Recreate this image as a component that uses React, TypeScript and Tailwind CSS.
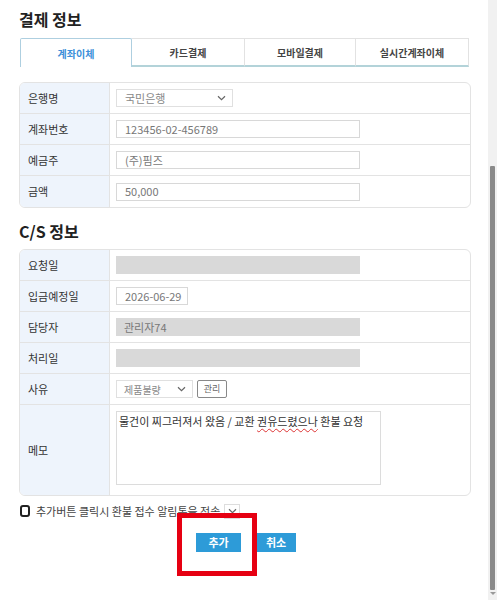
import React from "react";

const font = { fontFamily: '"Noto Sans CJK KR", "Noto Sans", sans-serif' };

function Chevron({ className = "" }: { className?: string }) {
  return (
    <svg width="9" height="6" viewBox="0 0 9 6" className={className}>
      <path d="M1 1.2 L4.5 4.6 L8 1.2" fill="none" stroke="#666" strokeWidth="1.2" />
    </svg>
  );
}

function Row({ label, children, h = "h-[31px]", last = false }: { label: string; children?: React.ReactNode; h?: string; last?: boolean }) {
  return (
    <div className={`flex ${h} ${last ? "" : "border-b border-[#e3e3e3]"}`}>
      <div className="w-[90px] shrink-0 bg-[#eef4fc] border-r border-[#e3e3e3] flex items-center pl-[8px] text-[11px] text-[#333]">
        {label}
      </div>
      <div className="flex-1 flex items-center pl-[6px]">{children}</div>
    </div>
  );
}

function TextBox({ value, w = "w-[244px]", gray = false }: { value?: string; w?: string; gray?: boolean }) {
  return (
    <div
      className={`${w} h-[18px] flex items-center pl-[8px] text-[11px] text-[#777] ${
        gray ? "bg-[#d9d9d9]" : "bg-white border border-[#d8d8d8]"
      }`}
    >
      {value}
    </div>
  );
}

export default function App() {
  const tabs = ["계좌이체", "카드결제", "모바일결제", "실시간계좌이체"];
  return (
    <div className="w-[497px] h-[600px] flex bg-white overflow-hidden relative" style={font}>
      <div className="flex-1 pl-[19px] pr-[17px] pt-[9px]">
        <div className="text-[16px] font-bold text-[#222] h-[20px] leading-[20px] mb-[9px]">결제 정보</div>
        {/* Tabs */}
        <div className="flex w-[450px] ml-[1px] h-[29px]">
          {tabs.map((t, i) =>
            i === 0 ? (
              <div
                key={t}
                className="w-[112px] flex items-center justify-center border-t border-l border-r border-[#aecfe0] rounded-t-[2px] text-[10px] font-bold text-[#3b8fd9]"
              >
                {t}
              </div>
            ) : (
              <div
                key={t}
                className={`${i === 1 ? "w-[113px]" : i === 2 ? "w-[111px]" : "w-[113px]"} flex items-center justify-center border-t border-r border-[#e2e2e2] border-b-2 border-b-[#b3d3d9] text-[10px] font-bold text-[#444]`}
              >
                {t}
              </div>
            )
          )}
        </div>
        {/* Table 1 */}
        <div className="mt-[15px] w-[452px] border border-[#e3e3e3] rounded-[6px] overflow-hidden">
          <Row label="은행명">
            <div className="w-[117px] h-[18px] border border-[#e0e0e0] flex items-center justify-between pl-[8px] pr-[6px] text-[11px] text-[#888]">
              국민은행
              <Chevron />
            </div>
          </Row>
          <Row label="계좌번호">
            <TextBox value="123456-02-456789" />
          </Row>
          <Row label="예금주">
            <TextBox value="(주)핌즈" />
          </Row>
          <Row label="금액" last>
            <TextBox value="50,000" />
          </Row>
        </div>

        <div className="mt-[14px] mb-[8px] text-[16px] font-bold text-[#222] h-[19px] leading-[19px]">C/S 정보</div>
        {/* Table 2 */}
        <div className="w-[452px] border border-[#e3e3e3] rounded-[6px] overflow-hidden">
          <Row label="요청일">
            <TextBox gray />
          </Row>
          <Row label="입금예정일">
            <TextBox value="2026-06-29" w="w-[72px]" />
          </Row>
          <Row label="담당자">
            <TextBox value="관리자74" gray />
          </Row>
          <Row label="처리일">
            <TextBox gray />
          </Row>
          <Row label="사유">
            <div className="flex items-center gap-[4px]">
              <div className="w-[77px] h-[18px] border border-[#e0e0e0] flex items-center justify-between pl-[7px] pr-[6px] text-[10px] text-[#888]">
                제품불량
                <Chevron />
              </div>
              <div className="w-[30px] h-[18px] border border-[#888] rounded-[2px] flex items-center justify-center text-[9px] text-[#666]">
                관리
              </div>
            </div>
          </Row>
          <Row label="메모" h="h-[90px]" last>
            <div className="w-[265px] h-[74px] border border-[#dcdcdc] px-[2px] py-[1px] text-[11px] text-[#333] leading-[16px] self-start mt-[6px]">
              물건이 찌그러져서 왔음 / 교환{" "}
              <span className="underline decoration-wavy decoration-[#d33] decoration-[1px] underline-offset-[2px]">권유드렸으나</span>{" "}
              환불 요청
            </div>
          </Row>
        </div>

        {/* checkbox row */}
        <div className="mt-[7px] flex items-center h-[16px]">
          <div className="w-[10px] h-[12px] border-2 border-[#222] rounded-[3px] ml-[1px]" />
          <span className="ml-[6px] text-[11px] text-[#444]">추가버튼 클릭시 환불 접수 알림톡을 전송</span>
          <div className="ml-[4px] w-[16px] h-[15px] border border-[#ddd] flex items-center justify-center">
            <Chevron />
          </div>
        </div>

        {/* buttons */}
        <div className="mt-[14px] flex justify-center gap-[15px] pl-[2px]">
          <div className="relative">
            <div className="w-[45px] h-[19px] bg-[#2d9bd8] text-white text-[11px] font-bold flex items-center justify-center">추가</div>
            <div className="absolute left-[-19px] top-[-20px] w-[80px] h-[63px] border-[5px] border-[#e60012]" />
          </div>
          <div className="w-[40px] h-[19px] bg-[#2d9bd8] text-white text-[11px] font-bold flex items-center justify-center">취소</div>
        </div>
      </div>
      {/* scrollbar */}
      <div className="w-[10px] h-full bg-[#f1f1f1] flex flex-col items-center">
        <div className="mt-[166px] w-[5px] h-[424px] bg-[#8a8a8a] rounded-[1px]" />
        <div className="mt-[2px] w-0 h-0 border-l-[3px] border-r-[3px] border-t-[3px] border-l-transparent border-r-transparent border-t-[#999]" />
      </div>
    </div>
  );
}
